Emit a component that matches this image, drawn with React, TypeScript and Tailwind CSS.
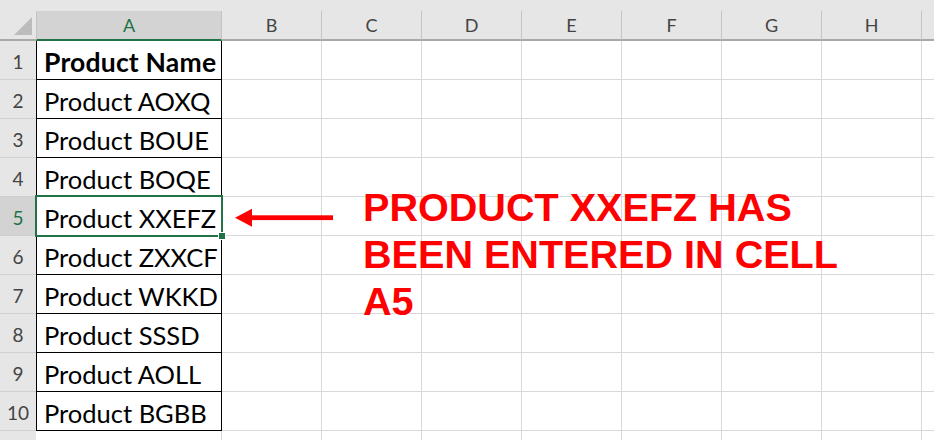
import React from "react";

const products = [
  "Product Name",
  "Product AOXQ",
  "Product BOUE",
  "Product BOQE",
  "Product XXEFZ",
  "Product ZXXCF",
  "Product WKKD",
  "Product SSSD",
  "Product AOLL",
  "Product BGBB",
];

const otherCols = ["B", "C", "D", "E", "F", "G", "H"];

export default function App() {
  return (
    <div className="relative w-[934px] h-[440px] overflow-hidden bg-white font-['Lato',sans-serif]">
      <div className="h-[11px] bg-[#e6e6e6]" />
      <div className="grid grid-cols-[36px_186px_repeat(7,100px)_1fr]">
        {/* header row */}
        <div className="relative h-[30px] bg-[#e6e6e6] border-b-2 border-[#a8a8a8]">
          <svg className="absolute left-[13px] top-[5px]" width="20" height="20" viewBox="0 0 20 20">
            <polygon points="19,1 19,19 1,19" fill="#bcbcbc" />
          </svg>
        </div>
        <div className="h-[30px] bg-[#d3d3d3] border-b-2 border-[#217346] border-l border-l-[#c4c4c4] border-r border-r-[#c4c4c4] flex items-center justify-center text-[18px] text-[#217346] pt-[1px]">
          A
        </div>
        {otherCols.map((c) => (
          <div
            key={c}
            className="h-[30px] bg-[#e6e6e6] border-b-2 border-b-[#a8a8a8] border-r border-r-[#c4c4c4] flex items-center justify-center text-[18px] text-[#444444] pt-[1px]"
          >
            {c}
          </div>
        ))}
        <div className="h-[30px] bg-[#e6e6e6] border-b-2 border-b-[#a8a8a8]" />

        {/* data rows */}
        {products.map((p, i) => {
          const selected = i === 4;
          return (
            <React.Fragment key={p}>
              <div
                className={
                  "h-[39px] border-b border-[#d0d0d0] flex items-end justify-center pb-[5px] text-[19px] leading-[24px] " +
                  (selected ? "bg-[#d3d3d3] text-[#217346]" : "bg-[#e6e6e6] text-[#444444]")
                }
              >
                {i + 1}
              </div>
              <div
                className={
                  "relative h-[39px] border-l border-r border-b border-black pl-[7px] pt-[6px] leading-[30px] text-black whitespace-nowrap " +
                  (i === 0 ? "font-bold text-[26.5px] tracking-[0.2px]" : "text-[25.5px]")
                }
              >
                {p}
                {selected && (
                  <>
                    <div className="absolute z-10 -left-[2px] -top-[2px] -right-[2px] -bottom-[2px] border-2 border-[#217346]" />
                    <div className="absolute z-20 -right-[5px] -bottom-[5px] w-[8px] h-[8px] bg-[#217346] border border-white" />
                  </>
                )}
              </div>
              {otherCols.map((c) => (
                <div key={c} className="h-[39px] border-r border-b border-[#d9d9d9]" />
              ))}
              <div className="h-[39px] border-b border-[#d9d9d9]" />
            </React.Fragment>
          );
        })}

        {/* partial row 11 */}
        <div className="h-[20px] bg-[#e6e6e6]" />
        <div className="h-[20px] border-r border-[#d9d9d9]" />
        {otherCols.map((c) => (
          <div key={c} className="h-[20px] border-r border-[#d9d9d9]" />
        ))}
        <div className="h-[20px]" />
      </div>

      {/* arrow */}
      <svg className="absolute left-[230px] top-[205px]" width="110" height="26" viewBox="0 0 110 26">
        <rect x="20" y="10.3" width="83" height="4.8" fill="#ff0000" />
        <polygon points="5,12.7 22,3.7 22,21.7" fill="#ff0000" />
      </svg>

      {/* annotation */}
      <div className="absolute left-[363px] top-[184px] font-['Liberation_Sans',Arial,sans-serif] font-bold text-[39.6px] leading-[47px] text-[#ff0000] whitespace-nowrap">
        PRODUCT XXEFZ HAS
        <br />
        BEEN ENTERED IN CELL
        <br />
        A5
      </div>
    </div>
  );
}
